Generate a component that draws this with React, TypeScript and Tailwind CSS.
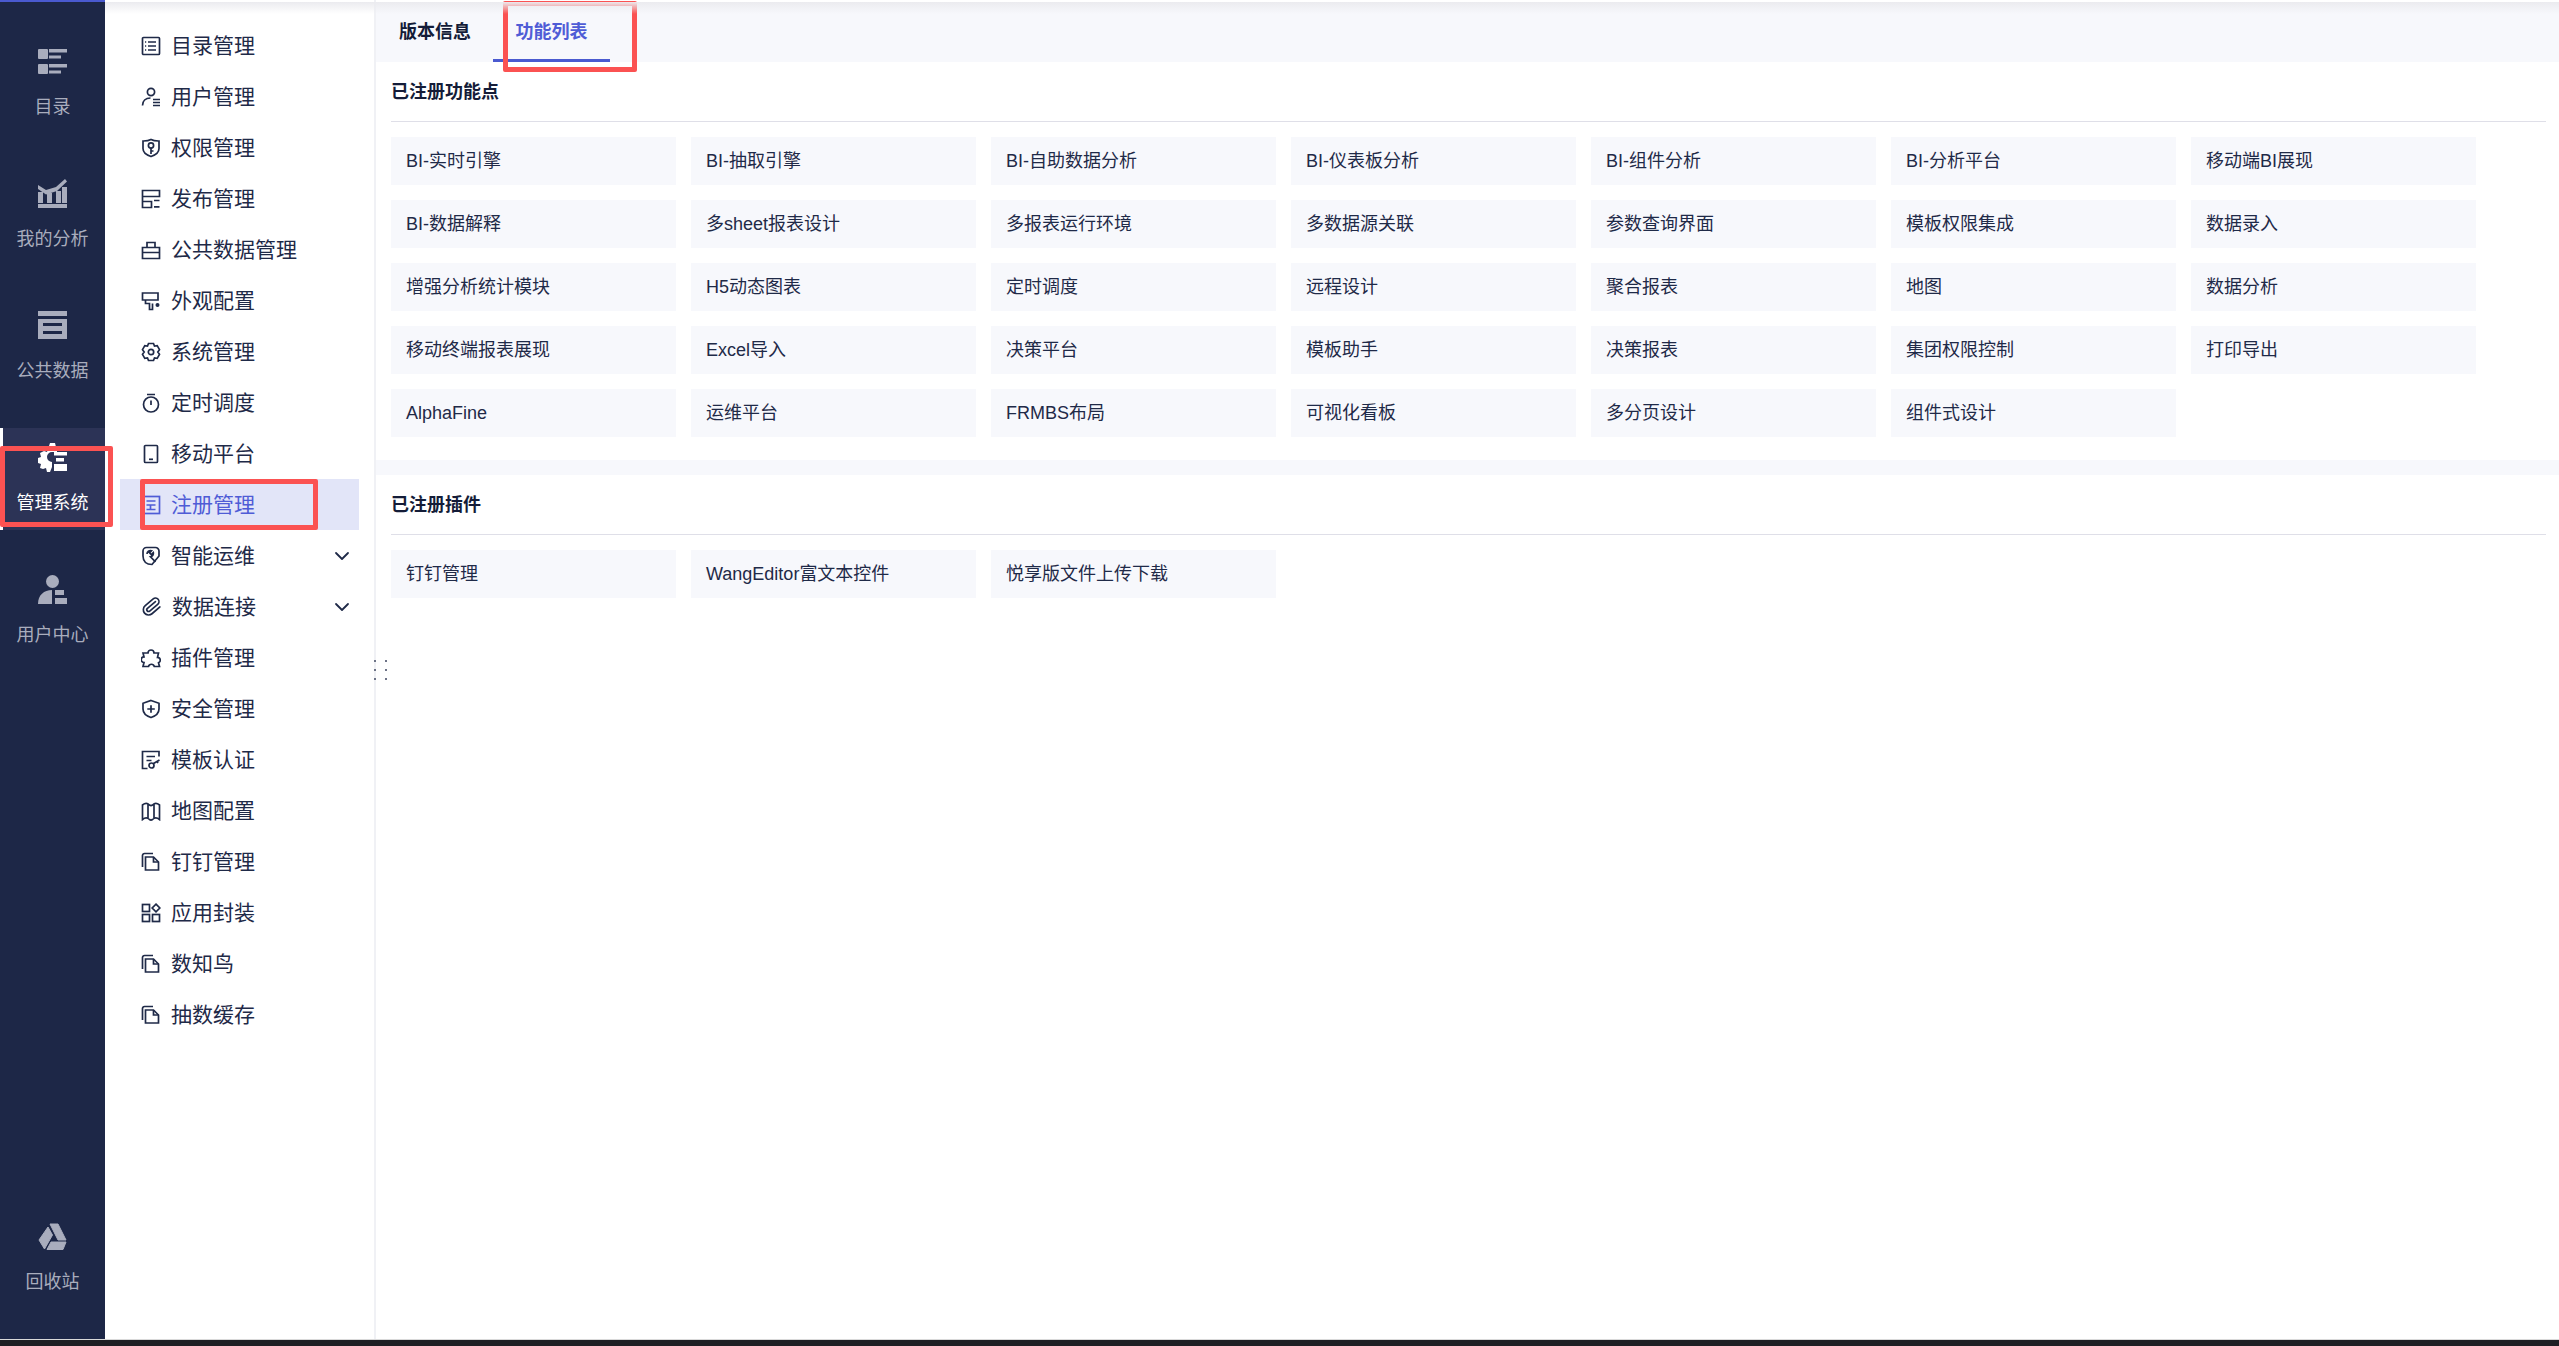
import React from 'react';
import { ChevronDown, Paperclip } from 'lucide-react';

const Svg = ({ children }: { children: React.ReactNode }) => (
  <svg viewBox="0 0 20 20" fill="none" stroke="currentColor" strokeWidth="1.7" className="w-[20px] h-[20px] shrink-0">
    {children}
  </svg>
);

const CopyIcon = () => (
  <Svg>
    <path d="M1.5 15V3.5a2 2 0 0 1 2-2H12" />
    <path d="M4.5 5h8l5 5v8h-13z" />
    <path d="M12.5 5v5h5" />
  </Svg>
);

const subIcons: Record<string, React.ReactNode> = {
  catalog: (
    <Svg>
      <rect x="1.5" y="1.5" width="17" height="17" rx="1" />
      <path d="M7 6h8M7 10h8M7 14h8M4 6h1.2M4 10h1.2M4 14h1.2" />
    </Svg>
  ),
  user: (
    <Svg>
      <circle cx="10" cy="5" r="3.6" />
      <path d="M1.5 18.5c0-4.5 3-7.5 8-7.5M12 12.5h7M12 15.5h7M12 18.5h7" />
    </Svg>
  ),
  key: (
    <Svg>
      <path d="M10 1.5c3 1.6 5.5 1.5 8 1.5v7.5c0 4-3.5 6.5-8 8-4.5-1.5-8-4-8-8V3c2.5 0 5 .1 8-1.5z" />
      <circle cx="10" cy="7.5" r="2.6" />
      <path d="M10 10v6M10 13h2.5" />
    </Svg>
  ),
  publish: (
    <Svg>
      <path d="M1.5 1.5h17v6h-17zM1.5 7.5v11h9v-6h-9M13 11.5h5.5M13 17.8h5.5" />
    </Svg>
  ),
  box: (
    <Svg>
      <path d="M1.5 7.5h17v11h-17zM6 7.5v-5h8v5M1.5 12.5h17" />
    </Svg>
  ),
  roller: (
    <Svg>
      <path d="M1.5 2H17v7H1.5zM4.5 9v3.5h4v6h3v-6" />
      <circle cx="16.5" cy="14" r="2" fill="currentColor" stroke="none" />
    </Svg>
  ),
  gear: (
    <Svg>
      <path d="M7.5 1.5h5l1 2.5 2.7-.3 2.3 4-1.7 2.3 1.7 2.3-2.3 4-2.7-.3-1 2.5h-5l-1-2.5-2.7.3-2.3-4L3.2 10 1.5 7.7l2.3-4 2.7.3z" />
      <circle cx="10" cy="10" r="2.7" />
    </Svg>
  ),
  timer: (
    <Svg>
      <circle cx="10" cy="11.5" r="7.5" />
      <path d="M6 1.5h8M10 7.5V12" />
    </Svg>
  ),
  mobile: (
    <Svg>
      <rect x="3.5" y="1.5" width="13" height="17" rx="1" />
      <path d="M8 15.3h4" />
    </Svg>
  ),
  register: (
    <Svg>
      <rect x="1.5" y="1.5" width="17" height="17" />
      <path d="M5.5 6h9M5.5 10h9M9.5 10v4.5M5.5 14.5h9" />
    </Svg>
  ),
  ops: (
    <Svg>
      <path d="M2 5a3.5 3.5 0 0 1 3.5-3.5h9A3.5 3.5 0 0 1 18 5v5l-7 8.5c-5.5 0-9-3-9-8.5z" />
      <path d="M6 8a3.5 3.5 0 0 1 4.5-3.3L8.5 6.8l1.7 1.7 2.1-2a3.5 3.5 0 0 1-2.8 4.3l5 5" />
    </Svg>
  ),
  clip: <Paperclip className="w-[21px] h-[21px] shrink-0 rotate-[5deg]" strokeWidth={1.9} />,
  puzzle: (
    <Svg>
      <path d="M7 5a3 3 0 0 1 6 0h4.5l-1 4.3a2.8 2.8 0 0 1 1 5.4l1 3.8h-5.200a3 3 0 0 0-5.800 0H2l1-4a2.800 2.800 0 0 1 0-5.600L2 5z" />
    </Svg>
  ),
  shield: (
    <Svg>
      <path d="M10 1.5l8 2.8V10c0 4-3.5 7-8 8.5C5.5 17 2 14 2 10V4.3z" />
      <path d="M10 6.3v7.5M6.3 10h7.5" />
    </Svg>
  ),
  cert: (
    <Svg>
      <path d="M18 6.5v-5H1.5v17h5M5.5 6.5H14M5.5 10.5h5" />
      <circle cx="10.5" cy="15.5" r="2.5" />
      <path d="M12.5 13.5l6-3.5M16 11.5l1 1.5" />
    </Svg>
  ),
  map: (
    <Svg>
      <path d="M1.5 4c2.5-2 5-2 7 0 .8.6 2.2.6 3 0 2-2 4.5-2 7 0v14.500c-2.500-2-5-2-7 0-.8.6-2.200.6-3 0-2-2-4.500-2-7 0zM7 2.500v15M13 2.500v15" />
    </Svg>
  ),
  copy: <CopyIcon />,
  app: (
    <Svg>
      <rect x="1.5" y="1.5" width="7" height="7" />
      <rect x="1.5" y="11.5" width="7" height="7" />
      <rect x="11.5" y="11.5" width="7" height="7" />
      <path d="M15 1.2L18.8 5 15 8.800 11.200 5z" />
    </Svg>
  ),
};

const subMenu = [
  { name: '目录管理', icon: 'catalog' },
  { name: '用户管理', icon: 'user' },
  { name: '权限管理', icon: 'key' },
  { name: '发布管理', icon: 'publish' },
  { name: '公共数据管理', icon: 'box' },
  { name: '外观配置', icon: 'roller' },
  { name: '系统管理', icon: 'gear' },
  { name: '定时调度', icon: 'timer' },
  { name: '移动平台', icon: 'mobile' },
  { name: '注册管理', icon: 'register', active: true },
  { name: '智能运维', icon: 'ops', arrow: true },
  { name: '数据连接', icon: 'clip', arrow: true },
  { name: '插件管理', icon: 'puzzle' },
  { name: '安全管理', icon: 'shield' },
  { name: '模板认证', icon: 'cert' },
  { name: '地图配置', icon: 'map' },
  { name: '钉钉管理', icon: 'copy' },
  { name: '应用封装', icon: 'app' },
  { name: '数知鸟', icon: 'copy' },
  { name: '抽数缓存', icon: 'copy' },
];

const railIcons: Record<string, React.ReactNode> = {
  catalog: (
    <>
      <rect x="0" y="2" width="10" height="10" rx="1" />
      <rect x="0" y="17" width="10" height="10" rx="1" />
      <rect x="11" y="2" width="18" height="3.5" />
      <rect x="11" y="8.5" width="12" height="3" />
      <rect x="11" y="17" width="18" height="3.5" />
      <rect x="11" y="23.5" width="12" height="3" />
    </>
  ),
  analysis: (
    <>
      <path d="M0 6l8 5 10-3 9-8 2 2.5-10 9.5-11 3.5L0 10z" />
      <rect x="0" y="13" width="5" height="11" />
      <rect x="9" y="14" width="5" height="10" />
      <rect x="18" y="12" width="5" height="12" />
      <rect x="24" y="8" width="5" height="16" />
      <rect x="0" y="25" width="29" height="4" />
    </>
  ),
  data: <path fillRule="evenodd" d="M0 0h29v5H0zM0 8h29v20H0zM5 12v3h19v-3zM5 20v3h19v-3z" />,
  system: (
    <>
      <path d="M12 0h5l1 4 1 .5V9h-5a5 5 0 0 0 0 10v5l-2 5h-3l-1-4-3 1-3-1 1-4-3-1v-5l3-1-1-4 4-2 3 1z" />
      <rect x="16" y="9" width="13" height="3.5" />
      <rect x="18" y="15" width="8" height="3.5" />
      <rect x="16" y="21" width="13" height="7" />
    </>
  ),
  user: (
    <>
      <circle cx="14.5" cy="6.5" r="6.5" />
      <path d="M0 29c0-9 6-14 14-14v14z" />
      <rect x="17" y="15" width="9" height="5" />
      <rect x="17" y="23" width="12" height="6" />
    </>
  ),
  recycle: (
    <g stroke="currentColor" strokeWidth="1" strokeLinejoin="round">
      <path d="M12 1h8l8 16h-8z" />
      <path d="M10 4l4.5 8L6.5 26 1 17z" />
      <path d="M13 19h15l-3 7.5H9z" />
    </g>
  ),
};

const rail = [
  { name: '目录', icon: 'catalog' },
  { name: '我的分析', icon: 'analysis' },
  { name: '公共数据', icon: 'data' },
  { name: '管理系统', icon: 'system', active: true },
  { name: '用户中心', icon: 'user' },
];

const features = [
  'BI-实时引擎', 'BI-抽取引擎', 'BI-自助数据分析', 'BI-仪表板分析', 'BI-组件分析', 'BI-分析平台', '移动端BI展现',
  'BI-数据解释', '多sheet报表设计', '多报表运行环境', '多数据源关联', '参数查询界面', '模板权限集成', '数据录入',
  '增强分析统计模块', 'H5动态图表', '定时调度', '远程设计', '聚合报表', '地图', '数据分析',
  '移动终端报表展现', 'Excel导入', '决策平台', '模板助手', '决策报表', '集团权限控制', '打印导出',
  'AlphaFine', '运维平台', 'FRMBS布局', '可视化看板', '多分页设计', '组件式设计',
];

const plugins = ['钉钉管理', 'WangEditor富文本控件', '悦享版文件上传下载'];

const RailItem = ({ name, icon, active }: { name: string; icon: string; active?: boolean }) => (
  <div
    className={
      active
        ? 'relative z-10 h-[102px] mb-[30px] flex flex-col items-center pt-[15px] bg-[#2c3356] text-white'
        : 'relative h-[102px] mb-[30px] flex flex-col items-center pt-[15px] text-[#a9adbd]'
    }
  >
    <svg viewBox="0 0 29 29" fill="currentColor" className="w-[29px] h-[29px]">
      {railIcons[icon]}
    </svg>
    <span className="mt-[18px] text-[18px] leading-[26px]">{name}</span>
    {active && <div className="absolute left-0 top-0 w-[3px] h-full bg-white" />}
    {active && (
      <div className="absolute left-0 top-[18px] w-[113px] h-[81px] border-[5px] border-[#fb5252] rounded-[2px]" />
    )}
  </div>
);

const Cell = ({ text }: { text: string }) => (
  <div className="h-[48px] flex items-center pl-[15px] bg-[#f7f8fc] text-[18px] text-[#1f2a48] whitespace-nowrap">
    {text}
  </div>
);

const Section = ({ title, items }: { title: string; items: string[] }) => (
  <section className="pl-[15px] pr-[13px]">
    <h2 className="h-[57px] pt-[2px] flex items-center text-[18px] font-bold text-[#141c38] border-b border-[#dfdfe8] box-content">
      {title}
    </h2>
    <div className="mt-[15px] grid grid-cols-[repeat(7,285px)] gap-[15px]">
      {items.map((item) => (
        <Cell key={item} text={item} />
      ))}
    </div>
  </section>
);

export default function App() {
  return (
    <div className="relative h-[1346px] w-full overflow-hidden bg-white font-['Liberation_Sans','Noto_Sans_CJK_SC',sans-serif]">
      <div className="flex h-[1339px]">
        <aside className="w-[105px] shrink-0 bg-[#1d2747] border-t-2 border-[#4a5ad0] flex flex-col justify-between">
          <div className="pt-[30px]">
            {rail.map((r) => (
              <RailItem key={r.name} name={r.name} icon={r.icon} active={r.active} />
            ))}
          </div>
          <div className="h-[116px] flex flex-col items-center text-[#a9adbd]">
            <svg viewBox="0 0 29 29" fill="currentColor" className="w-[29px] h-[29px]">
              {railIcons.recycle}
            </svg>
            <span className="mt-[17px] text-[18px] leading-[26px]">回收站</span>
          </div>
        </aside>

        <nav className="relative w-[271px] shrink-0 border-r-2 border-[#f0f1f5] pt-[20px] pl-[15px] pr-[15px]">
          {subMenu.map((m) => (
            <div
              key={m.name}
              className={
                m.active
                  ? 'relative h-[51px] flex items-center pl-[21px] bg-[#e2e5f8] text-[#4f5cd6]'
                  : 'relative h-[51px] flex items-center pl-[21px] text-[#1f2a48]'
              }
            >
              {subIcons[m.icon]}
              <span className="ml-[10px] text-[21px] leading-none">{m.name}</span>
              {m.arrow && <ChevronDown className="absolute right-[5px] w-[24px] h-[24px] text-[#1f2a48]" strokeWidth={1.8} />}
              {m.active && (
                <div className="absolute left-[20px] top-0 w-[178px] h-[51px] border-[5px] border-[#fb5252] rounded-[2px]" />
              )}
            </div>
          ))}
          <div className="absolute right-[-13px] top-[660px] grid grid-cols-2 gap-x-[9px] gap-y-[7px]">
            {[0, 1, 2, 3, 4, 5].map((d) => (
              <span key={d} className="w-[2px] h-[2px] bg-[#6d7387]" />
            ))}
          </div>
        </nav>

        <main className="flex-1 min-w-0 pt-[2px]">
          <div className="h-[60px] bg-[#f7f8fc] flex items-stretch">
            <div className="w-[117px] flex items-center pl-[23px] text-[18px] font-bold text-[#141c38]">版本信息</div>
            <div className="relative w-[117px] flex items-center justify-center pt-[3px] text-[18px] font-bold text-[#4f5cd6] border-b-[3px] border-[#4a5ad0]">
              功能列表
              <div className="absolute left-[10px] -top-[1px] w-[134px] h-[71px] border-[5px] border-[#fb5252] rounded-[2px]" />
            </div>
          </div>
          <Section title="已注册功能点" items={features} />
          <div className="h-[15px] mt-[23px] bg-[#f7f8fc]" />
          <Section title="已注册插件" items={plugins} />
        </main>
      </div>
      <div className="h-[7px] bg-[#1e1f24] border-t border-[#d9d9d9]" />
      <div className="absolute left-[105px] right-0 top-[2px] h-[12px] bg-gradient-to-b from-[#ebebef] to-transparent pointer-events-none" />
    </div>
  );
}
